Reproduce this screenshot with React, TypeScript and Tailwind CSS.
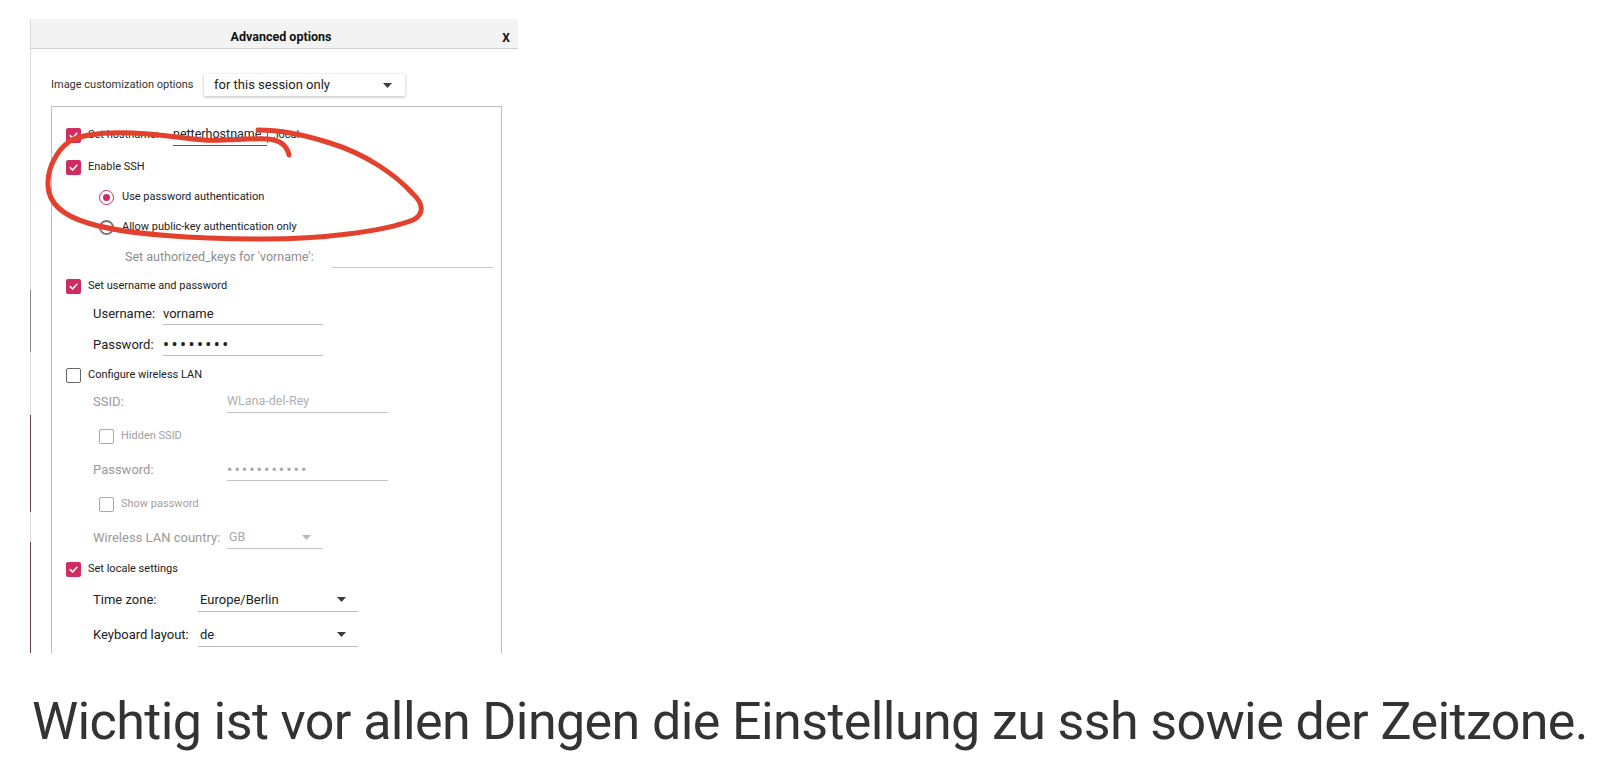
import React from "react"

function Check({ checked, muted }: { checked?: boolean; muted?: boolean }) {
  if (checked) {
    return (
      <span className="flex h-[15px] w-[15px] shrink-0 items-center justify-center rounded-[2px] bg-[#cf2d62]">
        <svg viewBox="0 0 12 12" className="h-[11px] w-[11px]">
          <path
            d="M2.4 6.2 L5 8.7 L9.7 3.5"
            fill="none"
            stroke="white"
            strokeWidth="1.7"
            strokeLinecap="round"
            strokeLinejoin="round"
          />
        </svg>
      </span>
    )
  }
  return (
    <span
      className={
        muted
          ? "h-[15px] w-[15px] shrink-0 rounded-[2px] border-[1.5px] border-[#a8a8a8]"
          : "h-[15px] w-[15px] shrink-0 rounded-[2px] border-[1.5px] border-[#666]"
      }
    />
  )
}

function Radio({ checked }: { checked?: boolean }) {
  if (checked) {
    return (
      <span className="flex h-[15px] w-[15px] shrink-0 items-center justify-center rounded-full border-[1.5px] border-[#cf2d62]">
        <span className="h-[7px] w-[7px] rounded-full bg-[#cf2d62]" />
      </span>
    )
  }
  return <span className="h-[15px] w-[15px] shrink-0 rounded-full border-[2px] border-[#777]" />
}

function Caret({ muted }: { muted?: boolean }) {
  return (
    <svg width="9" height="5" viewBox="0 0 9 5" className="shrink-0">
      <path d="M0 0h9L4.5 5z" fill={muted ? "#b8b8b8" : "#3a3a3a"} />
    </svg>
  )
}

export default function App() {
  return (
    <div className="relative h-[761px] w-[1600px] overflow-hidden bg-white font-['Roboto',sans-serif] text-[#222]">
      <div className="pl-[30px] pt-[19px]">
        <div className="h-[634px] w-[488px] overflow-hidden border-l border-[#dcdcdc] bg-white">
          {/* header */}
          <div className="flex h-[30px] items-center border-b border-[#cfcfcf] bg-[#f3f3f3] pt-[8px]">
            <div className="w-[37px]" />
            <div className="flex-1 text-center text-[12.5px] font-bold text-[#111]">Advanced options</div>
            <div className="w-[24px] text-center text-[12px] font-bold text-[#111]">X</div>
          </div>

          {/* customization combo */}
          <div className="flex items-center pl-[20px] pt-[25px]">
            <span className="w-[153px] text-[11px] text-[#333]">Image customization options</span>
            <div className="flex h-[22px] w-[201px] items-center justify-between bg-white pl-[10px] pr-[13px] text-[13px] text-[#222] shadow-[0_1px_3px_rgba(0,0,0,0.28)]">
              <span>for this session only</span>
              <Caret />
            </div>
          </div>

          {/* group box */}
          <div className="ml-[20px] mt-[10px] h-[700px] w-[451px] border border-[#bdbdbd] pt-[16px]">
            {/* hostname */}
            <div className="flex h-[24px] items-center pl-[14px]">
              <Check checked />
              <span className="ml-[7px] w-[85px] text-[11px]">Set hostname:</span>
              <div className="flex h-[22px] w-[94px] items-center border-b border-[#a3335f] text-[12.5px]">
                netterhostname
              </div>
              <span className="h-[15px] w-px bg-[#cf2d62]" />
              <span className="ml-[5px] text-[11px]">.local</span>
            </div>

            {/* ssh */}
            <div className="mt-[8px] flex h-[24px] items-center pl-[14px]">
              <Check checked />
              <span className="ml-[7px] text-[11px]">Enable SSH</span>
            </div>
            <div className="mt-[6px] flex h-[24px] items-center pl-[47px]">
              <Radio checked />
              <span className="ml-[8px] text-[11px]">Use password authentication</span>
            </div>
            <div className="mt-[6px] flex h-[24px] items-center pl-[47px]">
              <Radio />
              <span className="ml-[8px] text-[11px]">Allow public-key authentication only</span>
            </div>
            <div className="mt-[6px] flex h-[24px] items-center pl-[73px]">
              <span className="w-[207px] text-[12.5px] text-[#8d8d8d]">Set authorized_keys for 'vorname':</span>
              <div className="h-[22px] w-[161px] border-b border-[#c8c8c8]" />
            </div>

            {/* user */}
            <div className="mt-[5px] flex h-[24px] items-center pl-[14px]">
              <Check checked />
              <span className="ml-[7px] text-[11px]">Set username and password</span>
            </div>
            <div className="mt-[4px] flex h-[24px] items-center pl-[41px]">
              <span className="w-[70px] text-[13px]">Username:</span>
              <div className="flex h-[22px] w-[160px] items-center border-b border-[#b9b9b9] text-[13px]">vorname</div>
            </div>
            <div className="mt-[7px] flex h-[24px] items-center pl-[41px]">
              <span className="w-[70px] text-[13px]">Password:</span>
              <div className="flex h-[22px] w-[160px] items-center border-b border-[#b9b9b9] text-[18px] leading-none tracking-[2.4px]">
                ••••••••
              </div>
            </div>

            {/* wifi */}
            <div className="mt-[6px] flex h-[24px] items-center pl-[14px]">
              <Check />
              <span className="ml-[7px] text-[11px]">Configure wireless LAN</span>
            </div>
            <div className="mt-[3px] flex h-[24px] items-center pl-[41px] text-[#9a9a9a]">
              <span className="w-[134px] text-[13px]">SSID:</span>
              <div className="flex h-[22px] w-[161px] items-center border-b border-[#c4c4c4] text-[12.5px] text-[#b0b0b0]">
                WLana-del-Rey
              </div>
            </div>
            <div className="mt-[10px] flex h-[24px] items-center pl-[47px]">
              <Check muted />
              <span className="ml-[7px] text-[11px] text-[#a0a0a0]">Hidden SSID</span>
            </div>
            <div className="mt-[10px] flex h-[24px] items-center pl-[41px] text-[#9a9a9a]">
              <span className="w-[134px] text-[13px]">Password:</span>
              <div className="flex h-[22px] w-[161px] items-center border-b border-[#c4c4c4] text-[16px] leading-none tracking-[2px] text-[#a8a8a8]">
                •••••••••••
              </div>
            </div>
            <div className="mt-[10px] flex h-[24px] items-center pl-[47px]">
              <Check muted />
              <span className="ml-[7px] text-[11px] text-[#a0a0a0]">Show password</span>
            </div>
            <div className="mt-[10px] flex h-[24px] items-center pl-[41px] text-[#9a9a9a]">
              <span className="w-[134px] text-[13px]">Wireless LAN country:</span>
              <div className="flex h-[22px] w-[96px] items-center justify-between border-b border-[#c4c4c4] pl-[2px] pr-[12px] text-[12.5px] text-[#a8a8a8]">
                <span>GB</span>
                <Caret muted />
              </div>
            </div>

            {/* locale */}
            <div className="mt-[7px] flex h-[24px] items-center pl-[14px]">
              <Check checked />
              <span className="ml-[7px] text-[11px]">Set locale settings</span>
            </div>
            <div className="mt-[7px] flex h-[24px] items-center pl-[41px]">
              <span className="w-[105px] text-[13px]">Time zone:</span>
              <div className="flex h-[24px] w-[160px] items-center justify-between border-b border-[#b9b9b9] pl-[2px] pr-[12px] text-[13px]">
                <span>Europe/Berlin</span>
                <Caret />
              </div>
            </div>
            <div className="mt-[11px] flex h-[24px] items-center pl-[41px]">
              <span className="w-[105px] text-[13px]">Keyboard layout:</span>
              <div className="flex h-[24px] w-[160px] items-center justify-between border-b border-[#b9b9b9] pl-[2px] pr-[12px] text-[13px]">
                <span>de</span>
                <Caret />
              </div>
            </div>
          </div>
        </div>
      </div>

      <p className="mt-[43px] whitespace-nowrap pl-[32px] text-[52px] leading-none tracking-[-0.6px] text-[#333]">
        Wichtig ist vor allen Dingen die Einstellung zu ssh sowie der Zeitzone.
      </p>

      {/* traces of the window behind the dialog */}
      <div className="absolute left-[30px] top-[290px] h-[62px] w-px bg-[#8a8a8a]" />
      <div className="absolute left-[30px] top-[415px] h-[97px] w-px bg-[#6e3d4f]" />
      <div className="absolute left-[30px] top-[542px] h-[111px] w-px bg-[#6e3d4f]" />

      {/* hand drawn marker */}
      <svg className="pointer-events-none absolute left-0 top-0" width="1600" height="761" viewBox="0 0 1600 761">
        <path
          d="M 289 155 C 287 146, 280 140, 268 139 C 250 138, 225 141, 204 140 C 185 139, 160 134, 133 133 C 110 132, 85 133, 70 141 C 57 150, 47 168, 48 186 C 49 204, 64 216, 88 223 C 125 235, 200 239, 265 239 C 320 239, 382 232, 413 220 C 425 214, 423 203, 413 194 C 396 175, 366 154, 330 143 C 305 135, 280 130, 258 130"
          fill="none"
          stroke="#e2412e"
          strokeWidth="5"
          strokeLinecap="round"
          strokeLinejoin="round"
        />
      </svg>
    </div>
  )
}
